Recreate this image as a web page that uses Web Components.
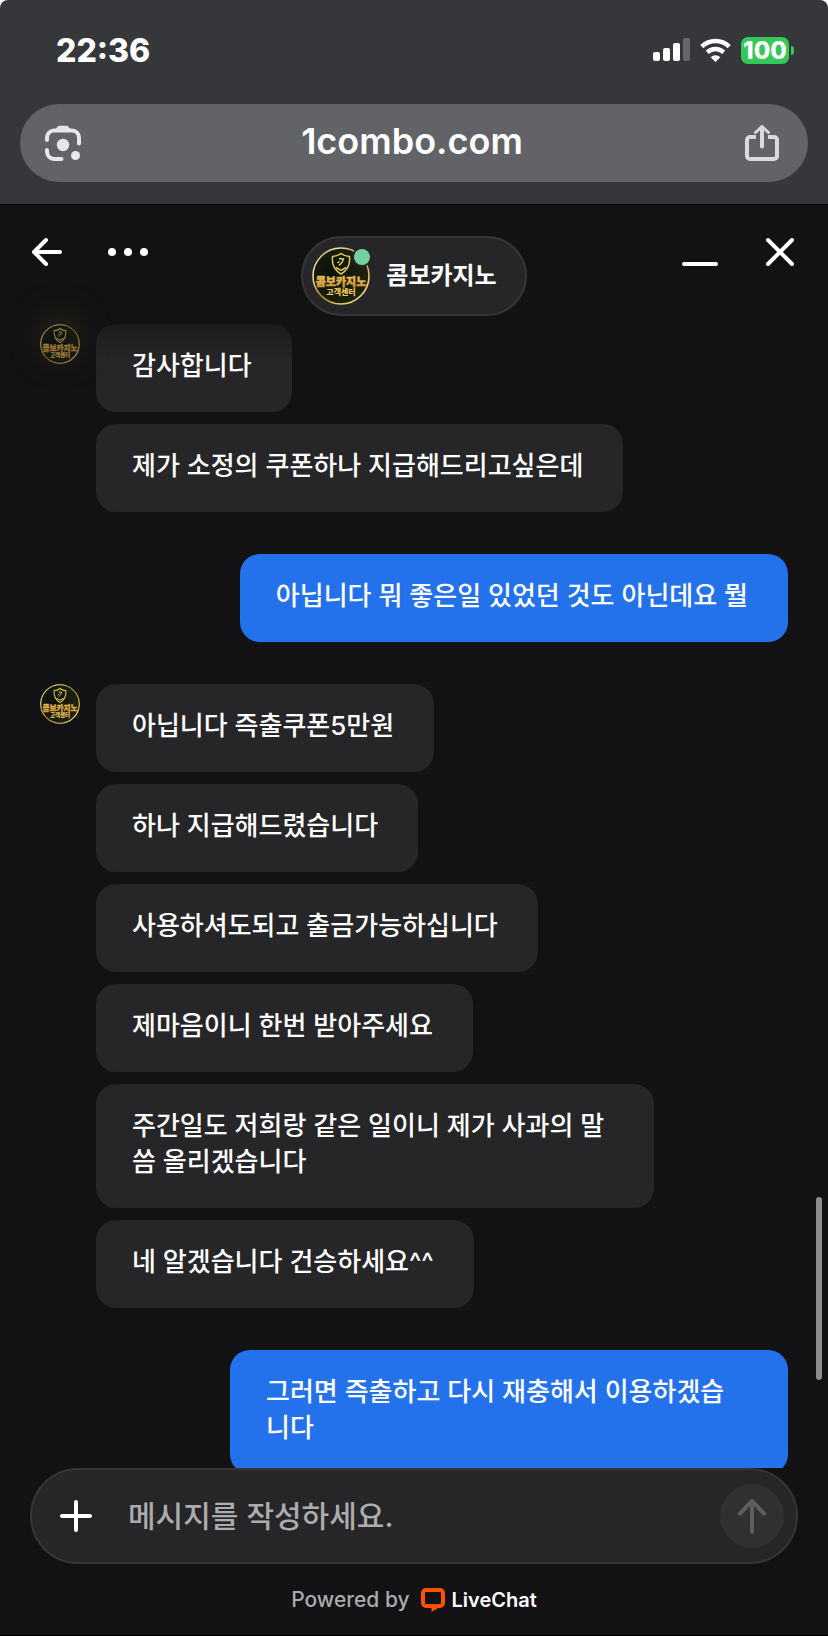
<!DOCTYPE html>
<html lang="ko">
<head>
<meta charset="utf-8">
<meta name="viewport" content="width=device-width, initial-scale=1">
<title>콤보카지노</title>
<style>
  html, body {
    margin: 0;
    height: 100%;
    background: #ffffff;
  }
  body {
    font-family: Inter, "Noto Sans CJK KR", sans-serif;
    color: #ffffff;
  }
</style>
</head>
<body>
<phone-screen>
  <status-bar time="22:36" battery="100"></status-bar>
  <address-bar>1combo.com</address-bar>
  <chat-window>
    <chat-header slot="header">콤보카지노</chat-header>
    <message-group faded>
      <chat-message faded>감사합니다</chat-message>
      <chat-message>제가 소정의 쿠폰하나 지급해드리고싶은데</chat-message>
    </message-group>
    <message-group own>
      <chat-message own>아닙니다 뭐 좋은일 있었던 것도 아닌데요 뭘</chat-message>
    </message-group>
    <message-group>
      <chat-message>아닙니다 즉출쿠폰5만원</chat-message>
      <chat-message>하나 지급해드렸습니다</chat-message>
      <chat-message>사용하셔도되고 출금가능하십니다</chat-message>
      <chat-message>제마음이니 한번 받아주세요</chat-message>
      <chat-message>주간일도 저희랑 같은 일이니 제가 사과의 말씀 올리겠습니다</chat-message>
      <chat-message>네 알겠습니다 건승하세요^^</chat-message>
    </message-group>
    <message-group own>
      <chat-message own>그러면 즉출하고 다시 재충해서 이용하겠습니다</chat-message>
    </message-group>
    <message-composer slot="footer"></message-composer>
    <powered-by slot="footer"></powered-by>
  </chat-window>
</phone-screen>

<script>
class PhoneScreen extends HTMLElement {
  constructor() {
    super();
    this.attachShadow({ mode: "open" });
    this.shadowRoot.innerHTML = `
      <style>
        :host {
          display: flex;
          flex-direction: column;
          height: 100vh;
          box-sizing: border-box;
          background: #36373b;
          border-radius: 8px 8px 0 0;
          overflow: hidden;
        }
      </style>
      <slot></slot>
    `;
  }
}

class StatusBar extends HTMLElement {
  constructor() {
    super();
    this.attachShadow({ mode: "open" });
  }

  connectedCallback() {
    this.shadowRoot.innerHTML = `
      <style>
        :host {
          display: flex;
          align-items: center;
          justify-content: space-between;
          height: 100px;
          padding: 0 34px 0 56px;
          margin-bottom: 4px;
        }
        time {
          font-size: 32px;
          font-weight: 800;
        }
        .icons {
          display: flex;
          align-items: center;
          gap: 10px;
        }
        svg { display: block; }
        .battery {
          display: flex;
          align-items: center;
          gap: 2px;
        }
        .level {
          width: 48px;
          height: 27px;
          border-radius: 7px;
          background: #34c759;
          font-size: 24px;
          font-weight: 800;
          line-height: 27px;
          text-align: center;
        }
        .nub {
          width: 3px;
          height: 9px;
          border-radius: 0 3px 3px 0;
          background: #34c759;
        }
      </style>
      <time>${this.getAttribute("time")}</time>
      <div class="icons">
        <svg width="37" height="24" viewBox="0 0 37 24" fill="#fff">
          <rect x="0" y="14" width="7" height="9" rx="2"/>
          <rect x="10" y="10" width="7" height="13" rx="2"/>
          <rect x="20" y="5" width="7" height="18" rx="2"/>
          <rect x="30" y="0" width="7" height="23" rx="2" fill="#66676a"/>
        </svg>
        <svg width="31" height="24" viewBox="0 0 31 24" fill="none" stroke="#fff" stroke-width="5">
          <path d="M1.8 8.6a19.6 19.6 0 0 1 27.4 0" stroke-width="4.6"/>
          <path d="M7.3 14.3a12 12 0 0 1 16.4 0" stroke-width="4.4"/>
          <path d="M15.500 24l-4.800-4.800a7 7 0 0 1 9.600 0z" fill="#fff" stroke="none"/>
        </svg>
        <div class="battery">
          <div class="level">${this.getAttribute("battery")}</div>
          <div class="nub"></div>
        </div>
      </div>
    `;
  }
}

class AddressBar extends HTMLElement {
  constructor() {
    super();
    this.attachShadow({ mode: "open" });
    this.shadowRoot.innerHTML = `
      <style>
        :host {
          display: grid;
          grid-template-columns: 1fr auto 1fr;
          align-items: center;
          height: 78px;
          margin: 0 20px 22px;
          padding: 0 28px 0 24px;
          border-radius: 39px;
          background: #626366;
        }
        button {
          display: block;
          padding: 0;
          border: 0;
          background: none;
          justify-self: start;
        }
        button:last-child { justify-self: end; }
        svg { display: block; }
        a {
          padding-bottom: 4px;
          color: inherit;
          font-size: 36px;
          font-weight: 600;
          line-height: 44px;
          text-decoration: none;
        }
      </style>
      <button type="button" aria-label="Lens">
        <svg width="38" height="38" viewBox="0 0 38 38" fill="none" stroke="#e6e7ec" stroke-width="4" stroke-linecap="round">
          <path d="M3 16v-2.500a7 7 0 0 1 7-7h18a7 7 0 0 1 7 7v6"/>
          <path d="M3 26v2a7 7 0 0 0 7 7h7.500"/>
          <path d="M11 6l2.500-3.200a3 3 0 0 1 2.200-1h6.600a3 3 0 0 1 2.200 1L27 6z" fill="#e6e7ec" stroke="none"/>
          <circle cx="19" cy="21" r="6.200" fill="#e6e7ec" stroke="none"/>
          <circle cx="31.500" cy="31.500" r="4.500" fill="#e6e7ec" stroke="none"/>
        </svg>
      </button>
      <a href="#"><slot></slot></a>
      <button type="button" aria-label="Share">
        <svg width="36" height="38" viewBox="0 0 36 38" fill="none" stroke="#d9dadd" stroke-width="4" stroke-linecap="round" stroke-linejoin="round">
          <path d="M12 13H6a3 3 0 0 0-3 3v16a3 3 0 0 0 3 3h24a3 3 0 0 0 3-3V16a3 3 0 0 0-3-3h-6" stroke-linecap="butt"/>
          <path d="M18 22.500V3.500"/>
          <path d="M11.500 8.500L18 2.500l6.500 6" stroke-width="3"/>
        </svg>
      </button>
    `;
  }
}

class AgentAvatar extends HTMLElement {
  constructor() {
    super();
    this.attachShadow({ mode: "open" });
    this.shadowRoot.innerHTML = `
      <style>
        :host {
          display: block;
          width: 40px;
          height: 40px;
          flex: none;
        }
        svg {
          display: block;
          width: 100%;
          height: 100%;
        }
        text {
          font-family: "Noto Sans CJK KR", sans-serif;
          font-weight: 900;
          text-anchor: middle;
        }
      </style>
      <svg viewBox="0 0 58 58">
        <defs>
          <radialGradient id="back" cx="35%" cy="45%" r="65%">
            <stop offset="0" stop-color="#07100a"/>
            <stop offset="1" stop-color="#1f2410"/>
          </radialGradient>
          <linearGradient id="ring" x1="0" y1="0" x2="1" y2="1">
            <stop offset="0" stop-color="#8a6a22"/>
            <stop offset=".2" stop-color="#f6e6a4"/>
            <stop offset=".5" stop-color="#b88a2c"/>
            <stop offset=".75" stop-color="#e6c65c"/>
            <stop offset="1" stop-color="#fff0b8"/>
          </linearGradient>
          <linearGradient id="gold" x1="0" y1="0" x2="0" y2="1">
            <stop offset="0" stop-color="#f8de70"/>
            <stop offset="1" stop-color="#c8871f"/>
          </linearGradient>
        </defs>
        <circle cx="29" cy="29" r="28" fill="url(#back)" stroke="url(#ring)" stroke-width="1.600"/>
        <path d="M29 6.500c2.500 2 5.500 3 8.500 3 .8 7-1.500 13.500-8.500 17.500-7-4-9.300-10.500-8.500-17.500 3 0 6-1 8.500-3z" fill="none" stroke="#e8c850" stroke-width="1.500"/>
        <path d="M24 20.500l5 3 5-3" fill="none" stroke="#e8c850" stroke-width="1.500"/>
        <path d="M27 11.500l4.500.5-1.500 3.500-3 3M25.500 16l2-1.500" fill="none" stroke="#f8de70" stroke-width="1.300"/>
        <text x="29" y="39" font-size="11" fill="url(#gold)" stroke="#d9a63a" stroke-width=".5">콤보카지노</text>
        <text x="29" y="48" font-size="8" fill="#edc95a">고객센터</text>
      </svg>
    `;
  }
}

class ChatHeader extends HTMLElement {
  constructor() {
    super();
    this.attachShadow({ mode: "open" });
    this.shadowRoot.innerHTML = `
      <style>
        :host {
          display: grid;
          grid-template-columns: 1fr auto 1fr;
          align-items: start;
          padding: 31px 32px 8px;
        }
        .actions {
          display: flex;
          gap: 44px;
        }
        .actions:last-child {
          justify-content: flex-end;
          gap: 46px;
        }
        button {
          display: block;
          padding: 0;
          border: 0;
          background: none;
        }
        svg {
          display: block;
          fill: none;
          stroke: #fff;
          stroke-width: 4;
          stroke-linecap: round;
          stroke-linejoin: round;
        }
        .agent {
          display: flex;
          align-items: center;
          gap: 16px;
          box-sizing: border-box;
          height: 80px;
          padding: 0 28px 0 9px;
          border: 2px solid #363538;
          border-radius: 40px;
          background: #262528;
        }
        .photo { position: relative; }
        agent-avatar {
          width: 58px;
          height: 58px;
        }
        .online {
          position: absolute;
          top: 2px;
          right: 0;
          width: 16px;
          height: 16px;
          border-radius: 50%;
          background: #74d0a0;
          box-shadow: 0 0 0 2px #262528;
        }
        h1 {
          margin: 0;
          font-size: 24px;
          font-weight: 600;
          line-height: 36px;
        }
      </style>
      <div class="actions">
        <button type="button" aria-label="Back">
          <svg width="32" height="32" viewBox="0 0 32 32"><path d="M28 16H2M14 4L2 16l12 12"/></svg>
        </button>
        <button type="button" aria-label="Menu">
          <svg width="40" height="32" viewBox="0 0 40 32"><path d="M4 16h0M20 16h0M36 16h0" stroke-width="8"/></svg>
        </button>
      </div>
      <div class="agent">
        <div class="photo">
          <agent-avatar></agent-avatar>
          <span class="online"></span>
        </div>
        <h1><slot></slot></h1>
      </div>
      <div class="actions">
        <button type="button" aria-label="Minimize">
          <svg width="36" height="32" viewBox="0 0 36 32"><path d="M2 28h32"/></svg>
        </button>
        <button type="button" aria-label="Close">
          <svg width="32" height="32" viewBox="0 0 32 32"><path d="M4 4l24 24M28 4L4 28"/></svg>
        </button>
      </div>
    `;
  }
}

class ChatMessage extends HTMLElement {
  constructor() {
    super();
    this.attachShadow({ mode: "open" });
    this.shadowRoot.innerHTML = `
      <style>
        :host {
          display: block;
          box-sizing: border-box;
          max-width: min(100%, 558px);
          padding: 24px 40px 28px 36px;
          border-radius: 20px;
          background: #262528;
          font-size: 26px;
          font-weight: 500;
          line-height: 36px;
        }
        :host([own]) { background: #2472eb; }
        /* scrolled half under the header */
        :host([faded]) {
          background: linear-gradient(#1c1b1e, #262528 36px);
        }
      </style>
      <slot></slot>
    `;
  }
}

class MessageGroup extends HTMLElement {
  constructor() {
    super();
    this.attachShadow({ mode: "open" });
  }

  connectedCallback() {
    const own = this.hasAttribute("own");
    this.shadowRoot.innerHTML = `
      <style>
        :host {
          display: flex;
          gap: 16px;
        }
        .bubbles {
          display: flex;
          flex: 1;
          min-width: 0;
          flex-direction: column;
          align-items: flex-start;
          gap: 12px;
        }
        :host([own]) .bubbles { align-items: flex-end; }
        :host([faded]) agent-avatar {
          opacity: 0.65;
          border-radius: 50%;
          box-shadow: 0 -8px 32px 4px rgba(120, 110, 30, 0.3);
        }
      </style>
      ${own ? "" : "<agent-avatar></agent-avatar>"}
      <div class="bubbles"><slot></slot></div>
    `;
  }
}

class ChatWindow extends HTMLElement {
  constructor() {
    super();
    this.attachShadow({ mode: "open" });
    this.shadowRoot.innerHTML = `
      <style>
        :host {
          display: flex;
          flex: 1;
          min-height: 0;
          flex-direction: column;
          border-top: 1px solid #000;
          border-bottom: 1px solid #000;
          background: #121114;
        }
        .list {
          position: relative;
          flex: 1 1 0;
          min-height: 0;
        }
        .messages {
          display: flex;
          flex-direction: column;
          gap: 42px;
          height: 100%;
          box-sizing: border-box;
          margin-top: -40px;
          padding: 40px 40px 0;
          height: calc(100% + 40px);
          overflow: hidden;
        }
        .messages ::slotted(*) { flex: none; }
        .thumb {
          position: absolute;
          right: 6px;
          bottom: 88px;
          width: 6px;
          height: 183px;
          border-radius: 3px;
          background: #8c8b8d;
        }
      </style>
      <slot name="header"></slot>
      <div class="list">
        <div class="messages"><slot></slot></div>
        <div class="thumb"></div>
      </div>
      <slot name="footer"></slot>
    `;
  }
}

class MessageComposer extends HTMLElement {
  constructor() {
    super();
    this.attachShadow({ mode: "open" });
    this.shadowRoot.innerHTML = `
      <style>
        :host {
          display: block;
          padding: 0 30px;
        }
        form {
          display: flex;
          align-items: center;
          box-sizing: border-box;
          height: 96px;
          padding: 0 12px 0 28px;
          border: 2px solid #363538;
          border-radius: 48px;
          background: #262528;
        }
        button {
          display: grid;
          place-items: center;
          padding: 0;
          border: 0;
          background: none;
        }
        .send {
          width: 64px;
          height: 64px;
          border-radius: 50%;
          background: #302f32;
        }
        svg {
          display: block;
          fill: none;
          stroke: #fff;
          stroke-width: 4;
          stroke-linecap: round;
          stroke-linejoin: round;
        }
        .send svg { stroke: #5d5c5f; }
        input {
          flex: 1;
          min-width: 0;
          margin: 0 16px 0 36px;
          padding: 0;
          border: 0;
          outline: 0;
          background: none;
          color: #fff;
          font: inherit;
          font-size: 30px;
          font-weight: 500;
          line-height: 44px;
        }
        input::placeholder {
          color: #acabad;
          opacity: 1;
        }
      </style>
      <form>
        <button type="button" aria-label="Attach">
          <svg width="32" height="32" viewBox="0 0 32 32"><path d="M2 16h28M16 2v28"/></svg>
        </button>
        <input type="text" aria-label="메시지" placeholder="메시지를 작성하세요.">
        <button class="send" type="submit" aria-label="Send">
          <svg width="32" height="36" viewBox="0 0 32 36"><path d="M16 34V3M4 15.500L16 3l12 12.500"/></svg>
        </button>
      </form>
    `;
    this.form = this.shadowRoot.querySelector("form");
    this.form.addEventListener("submit", this.submitForm.bind(this));
  }

  submitForm(event) {
    event.preventDefault();
  }
}

class PoweredBy extends HTMLElement {
  constructor() {
    super();
    this.attachShadow({ mode: "open" });
    this.shadowRoot.innerHTML = `
      <style>
        :host {
          display: flex;
          align-items: center;
          justify-content: center;
          gap: 10px;
          height: 71px;
          color: #acabad;
          font-size: 21px;
          font-weight: 500;
        }
        a {
          display: flex;
          align-items: center;
          gap: 6px;
          color: #fff;
          font-size: 20px;
          font-weight: 600;
          text-decoration: none;
        }
        svg { display: block; }
      </style>
      <span>Powered by</span>
      <a href="#">
        <svg width="26" height="26" viewBox="0 0 26 26">
          <path d="M6 3h14a3 3 0 0 1 3 3v10a3 3 0 0 1-3 3h-2.500l-4 2.500V19H6a3 3 0 0 1-3-3V6a3 3 0 0 1 3-3z" fill="none" stroke="#ff5100" stroke-width="4"/>
        </svg>
        LiveChat
      </a>
    `;
  }
}

customElements.define('agent-avatar', AgentAvatar);
customElements.define('phone-screen', PhoneScreen);
customElements.define('status-bar', StatusBar);
customElements.define('address-bar', AddressBar);
customElements.define('chat-header', ChatHeader);
customElements.define('chat-message', ChatMessage);
customElements.define('message-group', MessageGroup);
customElements.define('chat-window', ChatWindow);
customElements.define('message-composer', MessageComposer);
customElements.define('powered-by', PoweredBy);
</script>
</body>
</html>
